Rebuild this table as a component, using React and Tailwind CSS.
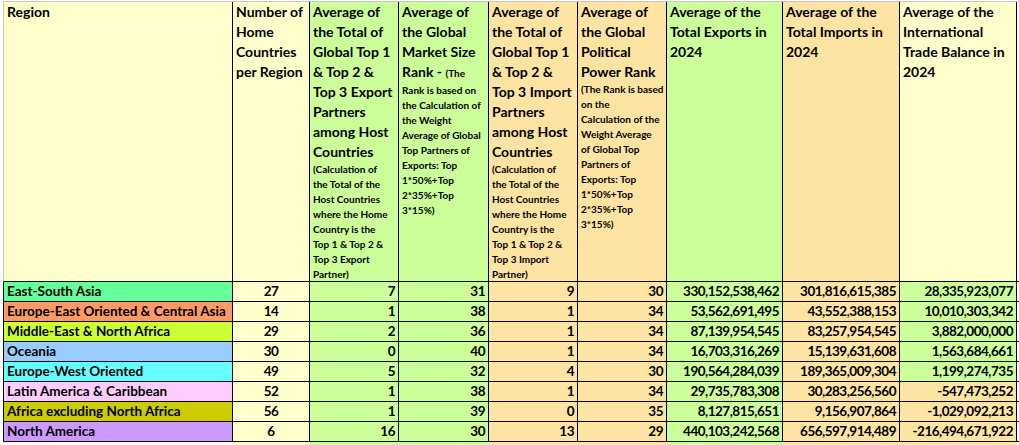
const YELLOW = "bg-[#ffffcc]";
const GREEN = "bg-[#ccff99]";
const ORANGE = "bg-[#fde4a3]";

const widths = [
  "w-[229px]",
  "w-[77px]",
  "w-[89px]",
  "w-[90px]",
  "w-[89px]",
  "w-[89px]",
  "w-[116px]",
  "w-[117px]",
  "w-[117px]",
];

const colBg = [null, YELLOW, GREEN, GREEN, ORANGE, ORANGE, GREEN, ORANGE, null];

const headers = [
  { big: ["Region"], bg: YELLOW },
  { big: ["Number of", "Home", "Countries", "per Region"], bg: YELLOW },
  {
    big: ["Average of", "the Total of", "Global Top 1", "& Top 2 &", "Top 3 Export", "Partners", "among Host", "Countries"],
    small: ["(Calculation of", "the Total of the", "Host Countries", "where the Home", "Country is the", "Top 1 & Top 2 &", "Top 3 Export", "Partner)"],
    bg: GREEN,
  },
  {
    big: ["Average of", "the Global", "Market Size"],
    mixed: ["Rank - ", "(The"],
    small: ["Rank is based on", "the Calculation of", "the Weight", "Average of Global", "Top Partners of", "Exports: Top", "1*50%+Top", "2*35%+Top", "3*15%)"],
    bg: GREEN,
  },
  {
    big: ["Average of", "the Total of", "Global Top 1", "& Top 2 &", "Top 3 Import", "Partners", "among Host", "Countries"],
    small: ["(Calculation of", "the Total of the", "Host Countries", "where the Home", "Country is the", "Top 1 & Top 2 &", "Top 3 Import", "Partner)"],
    bg: ORANGE,
  },
  {
    big: ["Average of", "the Global", "Political", "Power Rank"],
    small: ["(The Rank is based", "on the", "Calculation of the", "Weight Average", "of Global Top", "Partners of", "Exports: Top", "1*50%+Top", "2*35%+Top", "3*15%)"],
    bg: ORANGE,
  },
  { big: ["Average of the", "Total Exports in", "2024"], bg: GREEN },
  { big: ["Average of the", "Total Imports in", "2024"], bg: ORANGE },
  { big: ["Average of the", "International", "Trade Balance in", "2024"], bg: YELLOW },
];

const rows = [
  { region: "East-South Asia", bg: "bg-[#66ff99]", values: ["27", "7", "31", "9", "30", "330,152,538,462", "301,816,615,385", "28,335,923,077"] },
  { region: "Europe-East Oriented & Central Asia", bg: "bg-[#ff9966]", values: ["14", "1", "38", "1", "34", "53,562,691,495", "43,552,388,153", "10,010,303,342"] },
  { region: "Middle-East & North Africa", bg: "bg-[#ccff33]", values: ["29", "2", "36", "1", "34", "87,139,954,545", "83,257,954,545", "3,882,000,000"] },
  { region: "Oceania", bg: "bg-[#99ccff]", values: ["30", "0", "40", "1", "34", "16,703,316,269", "15,139,631,608", "1,563,684,661"] },
  { region: "Europe-West Oriented", bg: "bg-[#66ffff]", values: ["49", "5", "32", "4", "30", "190,564,284,039", "189,365,009,304", "1,199,274,735"] },
  { region: "Latin America & Caribbean", bg: "bg-[#ffccff]", values: ["52", "1", "38", "1", "34", "29,735,783,308", "30,283,256,560", "-547,473,252"] },
  { region: "Africa excluding North Africa", bg: "bg-[#cccc00]", values: ["56", "1", "39", "0", "35", "8,127,815,651", "9,156,907,864", "-1,029,092,213"] },
  { region: "North America", bg: "bg-[#cc99ff]", values: ["6", "16", "30", "13", "29", "440,103,242,568", "656,597,914,489", "-216,494,671,922"] },
];

function HeaderCell({ h, i }) {
  return (
    <div className={`${widths[i]} ${h.bg} shrink-0 border-r border-black pl-[3px] whitespace-nowrap`}>
      {h.big.map((line, k) => (
        <div key={k} className="text-[14px] leading-[20px]">
          {line}
        </div>
      ))}
      {h.mixed && (
        <div className="text-[14px] leading-[20px]">
          {h.mixed[0]}
          <span className="text-[10px]">{h.mixed[1]}</span>
        </div>
      )}
      {h.small &&
        h.small.map((line, k) => (
          <div key={k} className="text-[10px] leading-[15px]">
            {line}
          </div>
        ))}
    </div>
  );
}

export default function App() {
  return (
    <div
      className="bg-white w-[1019px] h-[445px] overflow-hidden pl-[3px] pt-[1px] font-bold text-black"
      style={{ fontFamily: "Lato, 'Liberation Sans', sans-serif" }}
    >
      {/* Header */}
      <div className="flex h-[281px] border-t border-l border-t-[#c6c6c6] border-l-[#c6c6c6] border-b border-b-black">
        {headers.map((h, i) => (
          <HeaderCell key={i} h={h} i={i} />
        ))}
      </div>

      {/* Data rows */}
      {rows.map((r) => {
        const negative = r.values[7].startsWith("-");
        return (
          <div key={r.region} className="flex h-[20px] border-l border-b border-black text-[13.5px] leading-[19px]">
            <div className={`${widths[0]} ${r.bg} shrink-0 border-r border-black pl-[3px] whitespace-nowrap`}>
              {r.region}
            </div>
            {r.values.map((v, k) => {
              const i = k + 1;
              const bg = i === 8 ? (negative ? ORANGE : GREEN) : colBg[i];
              return (
                <div
                  key={k}
                  className={`${widths[i]} ${bg} shrink-0 border-r border-black tracking-[-0.5px] ${
                    i === 1 ? "text-center" : "text-right pr-[3px]"
                  }`}
                >
                  {v}
                </div>
              );
            })}
          </div>
        );
      })}

      {/* Spill-over row below the table */}
      <div className="flex h-[10px] pl-[1px]">
        {widths.map((w, i) => (
          <div key={i} className={`${w} shrink-0 ${i === 0 ? "bg-white" : i === 8 ? ORANGE : colBg[i]}`} />
        ))}
      </div>
    </div>
  );
}
